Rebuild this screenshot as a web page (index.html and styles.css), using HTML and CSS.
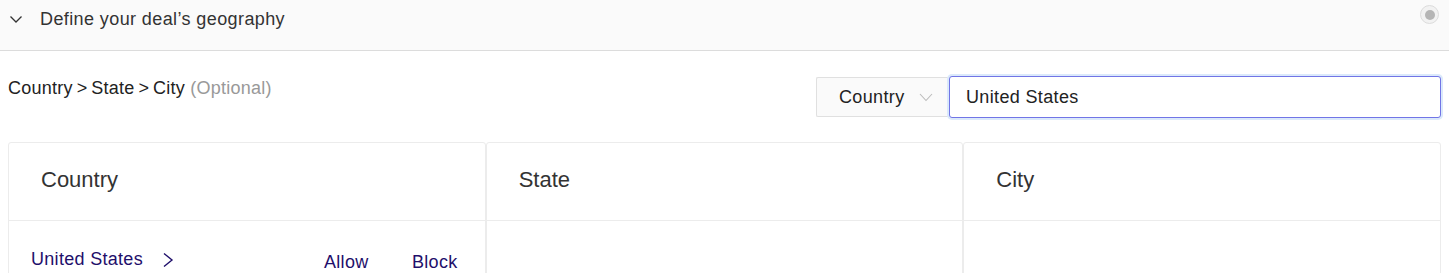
FILE: index.html
```html
<!DOCTYPE html>
<html>
<head>
<meta charset="utf-8">
<link rel="stylesheet" href="styles.css">
</head>
<body>
<div class="header">
  <svg class="chev" width="14" height="10" viewBox="0 0 14 10"><path d="M1.5 2.5 L7 8 L12.5 2.5" fill="none" stroke="#333" stroke-width="1.3"/></svg>
  <span class="title">Define your deal’s geography</span>
  <span class="radio"><span class="dot"></span></span>
</div>
<div class="content">
  <div class="toolbar">
    <div class="crumb">Country&thinsp;&gt;&thinsp;State&thinsp;&gt;&thinsp;City <span class="opt">(Optional)</span></div>
    <div class="search">
      <div class="select">Country
        <svg width="14" height="10" viewBox="0 0 14 10"><path d="M1 2 L7 8.5 L13 2" fill="none" stroke="#bbb" stroke-width="1.1"/></svg>
      </div>
      <div class="input">United States</div>
    </div>
  </div>
  <div class="table">
    <div class="col">
      <div class="colhead">Country</div>
      <div class="colbody">
        <div class="row">
          <span class="name">United States
            <svg width="12" height="16" viewBox="0 0 12 16"><path d="M2 1.5 L10 8 L2 14.5" fill="none" stroke="#1f0f6b" stroke-width="1.4"/></svg>
          </span>
          <span class="act allow">Allow</span>
          <span class="act">Block</span>
        </div>
      </div>
    </div>
    <div class="col">
      <div class="colhead">State</div>
      <div class="colbody"></div>
    </div>
    <div class="col">
      <div class="colhead">City</div>
      <div class="colbody"></div>
    </div>
  </div>
</div>
</body>
</html>
```
FILE: styles.css
```css
html, body {
  margin: 0;
  padding: 0;
  background: #fff;
  font-family: "Liberation Sans", Arial, sans-serif;
  color: #333;
}
.header {
  height: 50px;
  background: #fafafa;
  border-bottom: 1px solid #dcdcdc;
  display: flex;
  align-items: flex-start;
  position: relative;
}
.chev {
  margin: 14px 0 0 9px;
}
.title {
  margin: 8px 0 0 17px;
  font-size: 18px;
  letter-spacing: 0.4px;
  line-height: 22px;
  color: #333;
}
.radio {
  position: absolute;
  right: 10px;
  top: 5px;
  width: 17px;
  height: 17px;
  border: 1px solid #dcdcdc;
  border-radius: 50%;
  background: #f2f2f2;
  display: flex;
  align-items: center;
  justify-content: center;
}
.dot {
  width: 10px;
  height: 10px;
  border-radius: 50%;
  background: #b5b5b5;
}
.content {
  padding: 0 8px;
}
.toolbar {
  display: flex;
  justify-content: space-between;
  align-items: flex-start;
  margin-top: 25px;
}
.crumb {
  font-size: 18px;
  letter-spacing: 0.25px;
  line-height: 24px;
  color: #222;
}
.opt {
  color: #999;
}
.search {
  display: flex;
  margin-top: 1px;
}
.select {
  width: 133px;
  height: 40px;
  box-sizing: border-box;
  padding-left: 22px;
  background: #fafafa;
  border: 1px solid #e0e0e0;
  border-right: none;
  border-radius: 2px 0 0 2px;
  display: flex;
  align-items: center;
  font-size: 18px;
  letter-spacing: 0.35px;
  color: #222;
}
.select svg {
  margin-left: 15px;
}
.input {
  width: 492px;
  height: 42px;
  box-sizing: border-box;
  margin-top: -1px;
  border: 1px solid #7175e6;
  border-radius: 3px;
  box-shadow: 0 0 0 2px #dbe9fb;
  padding-left: 16px;
  display: flex;
  align-items: center;
  font-size: 18px;
  letter-spacing: 0.35px;
  color: #222;
  background: #fff;
}
.table {
  display: grid;
  grid-template-columns: 1fr 1fr 1fr;
  margin-top: 24px;
}
.col {
  border: 1px solid #ececec;
  border-radius: 3px;
  height: 160px;
}
.colhead {
  height: 77px;
  box-sizing: border-box;
  padding-bottom: 3px;
  border-bottom: 1px solid #ececec;
  display: flex;
  align-items: center;
  padding-left: 32px;
  font-size: 22px;
  color: #333;
}
.colhead {
  height: 78px;
}
.row {
  display: flex;
  align-items: baseline;
  padding: 28px 0 0 22px;
  font-size: 18px;
  letter-spacing: 0.3px;
  color: #1f0f6b;
}
.name {
  display: flex;
  align-items: center;
  width: 293px;
}
.name svg {
  margin-left: 19px;
}
.act {
  position: relative;
  top: 3px;
}
.allow {
  width: 88px;
}
```
